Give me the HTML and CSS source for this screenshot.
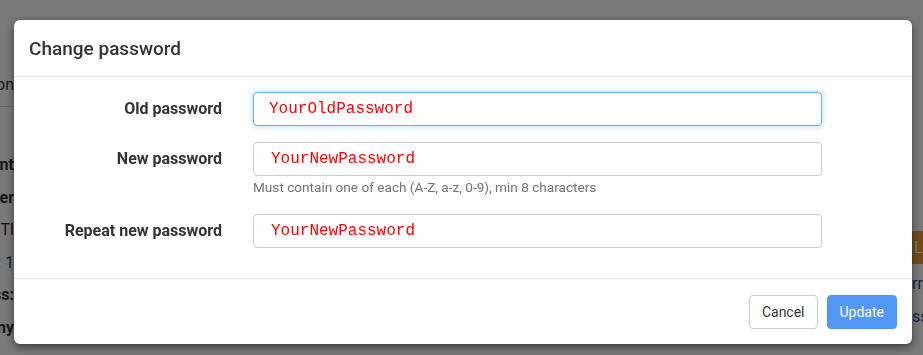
FILE: index.html
```html
<!DOCTYPE html>
<html>
<head>
	<meta charset="utf-8">
	<title>Change password</title>
	<link rel="stylesheet" href="styles.css">
</head>
<body>
	<div class="page">
		<div class="page-top">
			<span class="crumb">Account information</span>
		</div>
		<div class="page-body">
			<ul class="facts">
				<li class="strong">Account</li>
				<li class="strong">Account number</li>
				<li class="dark-red">TRIAL Tl</li>
				<li class="link">Valid until: 1</li>
				<li class="strong">Address:</li>
				<li class="strong">Company</li>
			</ul>
			<ul class="side">
				<li class="btn-orange">Log</li>
				<li class="link">rnal</li>
				<li class="link">ss</li>
			</ul>
		</div>
	</div>

	<div class="backdrop">
		<div class="modal">
			<div class="modal-header">
				<h4>Change password</h4>
			</div>
			<form class="modal-body">
				<div class="form-row">
					<label for="old">Old password</label>
					<div class="field">
						<input id="old" class="focus" type="text" value="YourOldPassword">
					</div>
				</div>
				<div class="form-row">
					<label for="new">New password</label>
					<div class="field">
						<input id="new" class="shift" type="text" value="YourNewPassword">
						<p class="help">Must contain one of each (A-Z, a-z, 0-9), min 8 characters</p>
					</div>
				</div>
				<div class="form-row">
					<label for="repeat">Repeat new password</label>
					<div class="field">
						<input id="repeat" class="shift" type="text" value="YourNewPassword">
					</div>
				</div>
			</form>
			<div class="modal-footer">
				<button type="button" class="btn">Cancel</button>
				<button type="button" class="btn btn-primary">Update</button>
			</div>
		</div>
	</div>
</body>
</html>
```
FILE: styles.css
```css
*{
	margin:0;
	padding:0;
	box-sizing:border-box;
}
body{
	width:100%;
	height:100%;
	background:#fff;
	font-family:Roboto, "Liberation Sans", sans-serif;
	color:#333;
	overflow:hidden;
}

/* page behind the dialog */
.page-top{
	height:107px;
	border-bottom:1px solid #ddd;
	display:flex;
	align-items:flex-end;
	justify-content:flex-end;
	width:14px;
	padding-bottom:12px;
	white-space:nowrap;
}
.crumb{
	font-size:16px;
}
.page-body{
	display:flex;
	justify-content:space-between;
}
.facts, .side{
	list-style:none;
	white-space:nowrap;
	font-size:16px;
}
.facts{
	width:14px;
	display:flex;
	flex-direction:column;
	align-items:flex-end;
	padding-top:48px;
	gap:12.6px;
}
.facts li{
	line-height:20px;
}
.side{
	width:11px;
	overflow:hidden;
	padding-top:124px;
}
.side li{
	line-height:20px;
	margin-bottom:13px;
}
.strong{
	font-weight:bold;
}
.dark-red{
	color:#4a1b10;
}
.link{
	color:#1d4f91;
}
.side .btn-orange{
	background:#f0a030;
	color:#fff;
	line-height:33px;
	padding-left:2px;
	margin-bottom:10px;
}

/* dialog */
.backdrop{
	position:fixed;
	top:0;
	left:0;
	right:0;
	bottom:0;
	background:rgba(0,0,0,0.53);
	padding:20px 0 0 14px;
}
.modal{
	width:898px;
	background:#fff;
	border-radius:6px;
	box-shadow:0 3px 9px rgba(0,0,0,0.5);
}
.modal-header{
	padding:0 15px;
	height:57px;
	border-bottom:1px solid #e5e5e5;
	display:flex;
	align-items:center;
}
.modal-header h4{
	font-size:19px;
	font-weight:500;
	color:#333;
}
.modal-body{
	padding:15px 90px 30px 15px;
	display:flex;
	flex-direction:column;
	gap:16px;
}
.form-row{
	display:grid;
	grid-template-columns:193px 1fr;
	column-gap:31px;
	align-items:start;
}
.form-row label{
	text-align:right;
	font-weight:bold;
	font-size:16px;
	line-height:34px;
	color:#333;
}
.field input{
	display:block;
	width:100%;
	height:34px;
	border:1px solid #ccc;
	border-radius:4px;
	padding:0 15px;
	font-family:"Liberation Mono", monospace;
	font-size:16px;
	color:#f00;
	outline:none;
}
.field input.shift{
	padding-left:17px;
}
.field input.focus{
	border-color:#66afe9;
	box-shadow:0 0 6px rgba(102,175,233,0.5);
}
.help{
	margin-top:1px;
	margin-bottom:1px;
	font-size:13.6px;
	line-height:20px;
	color:#737373;
}
.modal-footer{
	border-top:1px solid #e5e5e5;
	padding:16px 15px 15px;
	display:flex;
	justify-content:flex-end;
	gap:9px;
}
.btn{
	height:34px;
	padding:0 12px;
	font-family:Roboto, "Liberation Sans", sans-serif;
	font-size:14px;
	color:#333;
	background:#fff;
	border:1px solid #ccc;
	border-radius:4px;
}
.btn-primary{
	background:#5097f6;
	border-color:#4b92f2;
	color:#fff;
}
```
